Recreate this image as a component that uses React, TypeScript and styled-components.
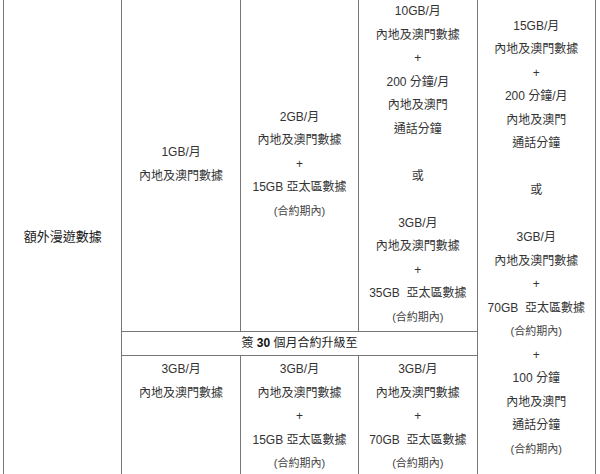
import React from "react";
import styled, { createGlobalStyle } from "styled-components";

const Global = createGlobalStyle`
  html, body { margin: 0; padding: 0; background: #fff; }
  body {
    font-family: "Liberation Sans", Arial, "Noto Sans CJK TC", sans-serif;
    color: #333;
    overflow: hidden;
  }
`;

const Page = styled.div`
  width: 600px;
  height: 474px;
  overflow: hidden;
  padding: 0 0 0 3px;
  box-sizing: border-box;
`;

const Table = styled.table`
  width: 593px;
  margin-top: -3px;
  border-collapse: collapse;
  table-layout: fixed;
  font-size: 12px;
`;

const Cell = styled.td<{ $valign?: "top" | "middle" }>`
  border: 1px solid #777;
  padding: 2px 2px;
  text-align: center;
  vertical-align: ${(p) => p.$valign ?? "middle"};
`;

const LabelCell = styled(Cell)`
  font-size: 13px;
  color: #1a1a1a;
  padding-bottom: 6px;
`;

const UpgradeCell = styled(Cell)`
  padding: 0 2px;
  height: 23px;
  line-height: 23px;
  color: #222;
`;

const Line = styled.div`
  height: 23.5px;
  line-height: 23.5px;
  white-space: pre;
`;

const Note = styled.span`
  font-size: 11px;
  color: #444;
`;

const Strong = styled.b`
  font-weight: 700;
  color: #111;
`;

type Item = string | { note: string };

const renderLines = (items: Item[]) =>
  items.map((it, i) => (
    <Line key={i}>
      {typeof it === "string" ? it || "\u00a0" : <Note>{it.note}</Note>}
    </Line>
  ));

const contract = { note: "(合約期內)" };

const col2Top: Item[] = ["1GB/月", "內地及澳門數據"];
const col3Top: Item[] = ["2GB/月", "內地及澳門數據", "+", "15GB 亞太區數據", contract];
const col4Top: Item[] = [
  "10GB/月",
  "內地及澳門數據",
  "+",
  "200 分鐘/月",
  "內地及澳門",
  "通話分鐘",
  "",
  "或",
  "",
  "3GB/月",
  "內地及澳門數據",
  "+",
  "35GB  亞太區數據",
  contract,
];
const col5: Item[] = [
  "15GB/月",
  "內地及澳門數據",
  "+",
  "200 分鐘/月",
  "內地及澳門",
  "通話分鐘",
  "",
  "或",
  "",
  "3GB/月",
  "內地及澳門數據",
  "+",
  "70GB  亞太區數據",
  contract,
  "+",
  "100 分鐘",
  "內地及澳門",
  "通話分鐘",
  contract,
];
const col2Bottom: Item[] = ["3GB/月", "內地及澳門數據"];
const col3Bottom: Item[] = ["3GB/月", "內地及澳門數據", "+", "15GB 亞太區數據", contract];
const col4Bottom: Item[] = ["3GB/月", "內地及澳門數據", "+", "70GB  亞太區數據", contract];

export default function App() {
  return (
    <>
      <Global />
      <Page>
        <Table>
          <colgroup>
            <col />
            <col />
            <col />
            <col />
            <col />
          </colgroup>
          <tbody>
            <tr>
              <LabelCell rowSpan={3}>額外漫遊數據</LabelCell>
              <Cell>{renderLines(col2Top)}</Cell>
              <Cell>{renderLines(col3Top)}</Cell>
              <Cell>{renderLines(col4Top)}</Cell>
              <Cell rowSpan={3}>{renderLines(col5)}</Cell>
            </tr>
            <tr>
              <UpgradeCell colSpan={3}>
                簽 <Strong>30</Strong> 個月合約升級至
              </UpgradeCell>
            </tr>
            <tr>
              <Cell $valign="top">{renderLines(col2Bottom)}</Cell>
              <Cell $valign="top">{renderLines(col3Bottom)}</Cell>
              <Cell $valign="top">{renderLines(col4Bottom)}</Cell>
            </tr>
          </tbody>
        </Table>
      </Page>
    </>
  );
}
